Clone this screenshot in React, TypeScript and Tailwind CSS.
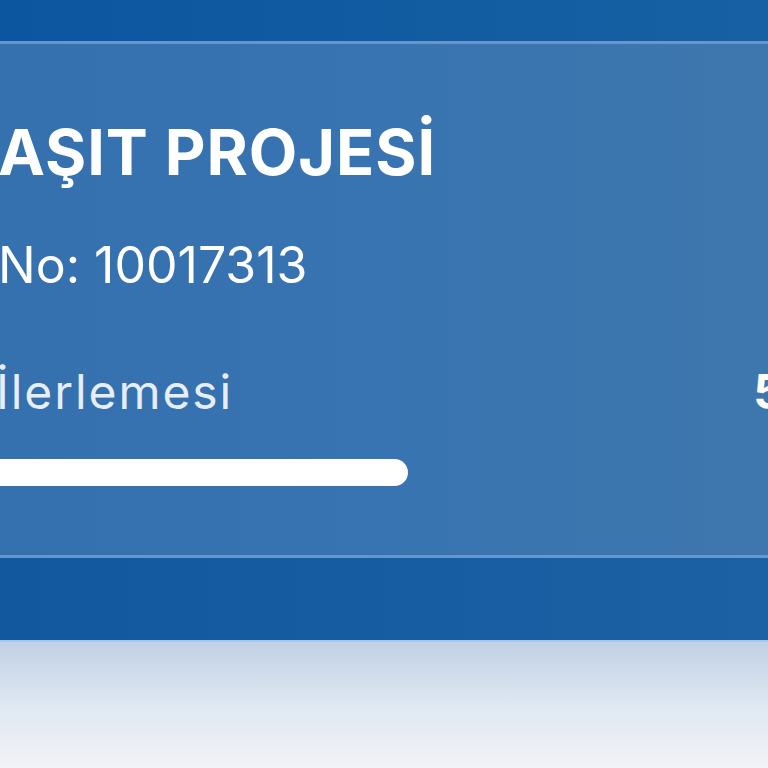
import React from 'react';

const font = { fontFamily: 'Inter, "Noto Sans", sans-serif' };

export default function App() {
  return (
    <div className="w-[768px] h-[768px] overflow-hidden flex flex-col bg-white" style={font}>
      {/* top band */}
      <div className="h-[41px] shrink-0 bg-gradient-to-r from-[#0c56a0] to-[#1660a3]" />

      {/* card */}
      <div className="h-[517px] shrink-0 border-y-[3px] border-y-[#6496cf] bg-gradient-to-r from-[#3570af] via-[#3874b1] to-[#3e77ad] flex flex-col">
        <div className="pt-[77px] -ml-[2px]">
          <h1 className="text-[63px] leading-none font-bold text-white tracking-[0.015em] whitespace-nowrap">
            AŞIT PROJESİ
          </h1>
          <p className="mt-[56px] text-[50px] leading-none text-white whitespace-nowrap">No: 10017313</p>
        </div>

        <div className="mt-[78px] flex items-end justify-between">
          <span className="-ml-[4px] text-[48px] leading-none text-[#e7eef8] tracking-[0.04em]">İlerlemesi</span>
          <span className="-mr-[16px] text-[48px] leading-none font-bold text-white">5</span>
        </div>

        <div className="mt-[43px] -ml-[20px] w-[428px] h-[27px] rounded-full bg-white" />
      </div>

      {/* lower band */}
      <div className="h-[82px] shrink-0 bg-gradient-to-r from-[#11589f] to-[#1c61a3]" />

      {/* page background */}
      <div className="flex-1 border-t-2 border-t-[#aac7ea] bg-gradient-to-b from-[#c0d0e4] via-[#dfe8f2] to-[#f2f2f7]" />
    </div>
  );
}
